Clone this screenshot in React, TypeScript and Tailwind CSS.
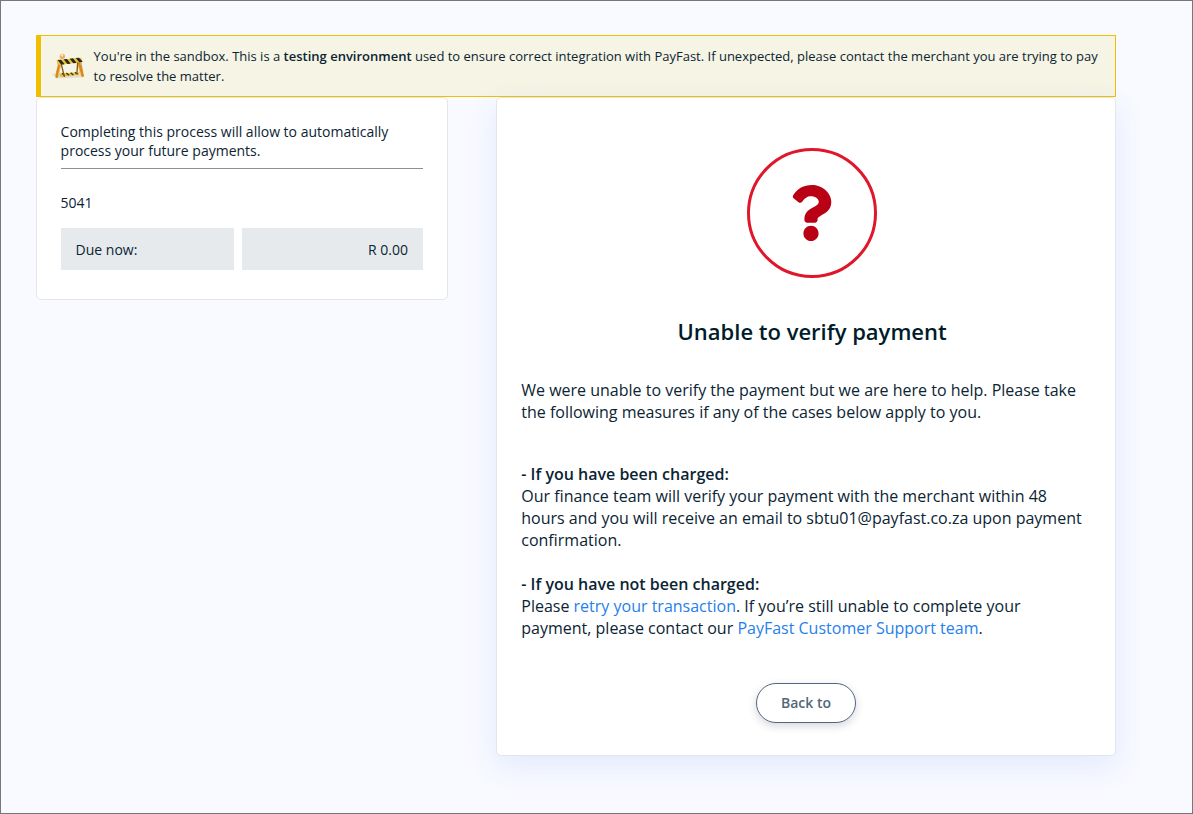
import { FaQuestion } from "react-icons/fa";

function Barrier() {
  return (
    <svg className="size-[40px] shrink-0" viewBox="0 -2 120 120">
      <path d="M7 83 22 77l70 7 6 8-76 3z" fill="#c9c5b4" opacity=".5" />
      <path d="m28 48-8 30M91 40l7 38" stroke="#c2a16a" strokeWidth="4" />
      <path d="m28 81 60-5v8l-58 7z" fill="#e9bd3c" />
      <path d="m36 80 8 7M49 79l8 7M62 78l8 7M75 77l8 6" stroke="#3a3220" strokeWidth="4" />
      <path d="m30 48-10 42M84 42l14 45" stroke="#d9861c" strokeWidth="8" strokeLinecap="round" />
      <path d="m33 50-8 36M83 50l9 34" stroke="#efc14a" strokeWidth="3" strokeLinecap="round" />
      <path d="m34 53 9 36M83 48l-2 28" stroke="#8d5417" strokeWidth="4" strokeLinecap="round" />
      <path d="m20 40 74-7 3 13-75 9z" fill="#e9c23a" />
      <path d="m23 40 10-1 11 14-10 1zM41 38l10-1 11 14-10 1zM59 36l10-1 11 14-10 1zM77 34l10-1 10 11v2l-9 1z" fill="#2b281c" />
      <circle cx="37" cy="29" r="8" fill="#e5ad5b" />
      <circle cx="36" cy="26" r="4" fill="#f9e4b8" />
    </svg>
  );
}

function SandboxNotice() {
  return (
    <div className="relative z-0 flex h-[62px] items-center border border-l-[5px] border-[#f0c000] bg-[#f6f4e4] pl-[9px] text-[13px] leading-[20px]">
      <Barrier />
      <p className="ml-[3.6px] whitespace-nowrap">
        You're in the sandbox. This is a <b className="font-semibold">testing environment</b> used to ensure correct integration with PayFast. If unexpected, please contact the merchant you are trying to pay
        <br />
        to resolve the matter.
      </p>
    </div>
  );
}

function Summary() {
  return (
    <section className="h-[203px] w-[412px] rounded-[5px] border border-[#e3e6ea] bg-white pr-[24px] pl-[23.6px] pt-[24px] text-[14px] leading-[19px]">
      <p className="border-b border-[#8f8f8f] pb-[8px]">
        Completing this process will allow to automatically
        <br />
        process your future payments.
      </p>
      <p className="mt-[24px]">5041</p>
      <div className="mt-[16px] flex h-[42px] gap-2">
        <div className="flex w-[173px] items-center bg-[#e6eaed] pl-[15px]">Due now:</div>
        <div className="flex flex-1 items-center justify-end bg-[#e6eaed] pr-[15px]">R 0.00</div>
      </div>
    </section>
  );
}

function Result() {
  return (
    <section className="relative z-10 flex h-[659px] w-[620px] flex-col rounded-[5px] border border-[#e3e6ea] bg-white pr-[24px] pl-[24.25px] pt-[50px] text-[16px] leading-[22px] shadow-[0_10px_30px_rgba(50,93,242,0.1)]">
      <div className="ml-[225.75px] flex size-[130px] items-center justify-center rounded-full border-[3px] border-[#e0162b] text-[#b90015]">
        <FaQuestion className="mr-[2px] h-[56px] w-[42px]" />
      </div>
      <h1 className="mt-[38px] pl-[12px] text-center text-[22px] leading-[30px] font-semibold text-[#001b2a]">Unable to verify payment</h1>
      <p className="mt-[33px] whitespace-nowrap">
        We were unable to verify the payment but we are here to help. Please take
        <br />
        the following measures if any of the cases below apply to you.
      </p>
      <p className="mt-[40px] whitespace-nowrap">
        <b className="font-semibold">- If you have been charged:</b>
        <br />
        Our finance team will verify your payment with the merchant within 48
        <br />
        hours and you will receive an email to sbtu01@payfast.co.za upon payment
        <br />
        confirmation.
      </p>
      <p className="mt-[22px] whitespace-nowrap">
        <b className="font-semibold">- If you have not been charged:</b>
        <br />
        Please <a className="text-[#2680eb]">retry your transaction</a>. If you’re still unable to complete your
        <br />
        payment, please contact our <a className="text-[#2680eb]">PayFast Customer Support team</a>.
      </p>
      <button className="mt-[44px] ml-[234.75px] h-[40px] w-[100px] shrink-0 rounded-full border border-[#52677a] bg-white text-[14px] font-semibold text-[#52677a] shadow-[0_3px_8px_rgba(50,50,93,0.2)]">
        Back to
      </button>
    </section>
  );
}

export default function App() {
  return (
    <main className="h-[814px] w-[1193px] overflow-hidden border border-[#77777b] bg-[#f8faff] pt-[34px] pl-[35px] font-['Open_Sans',sans-serif] text-[#0b2433]">
      <div className="w-[1080px]">
        <SandboxNotice />
        <div className="flex items-start justify-between">
          <Summary />
          <Result />
        </div>
      </div>
    </main>
  );
}
